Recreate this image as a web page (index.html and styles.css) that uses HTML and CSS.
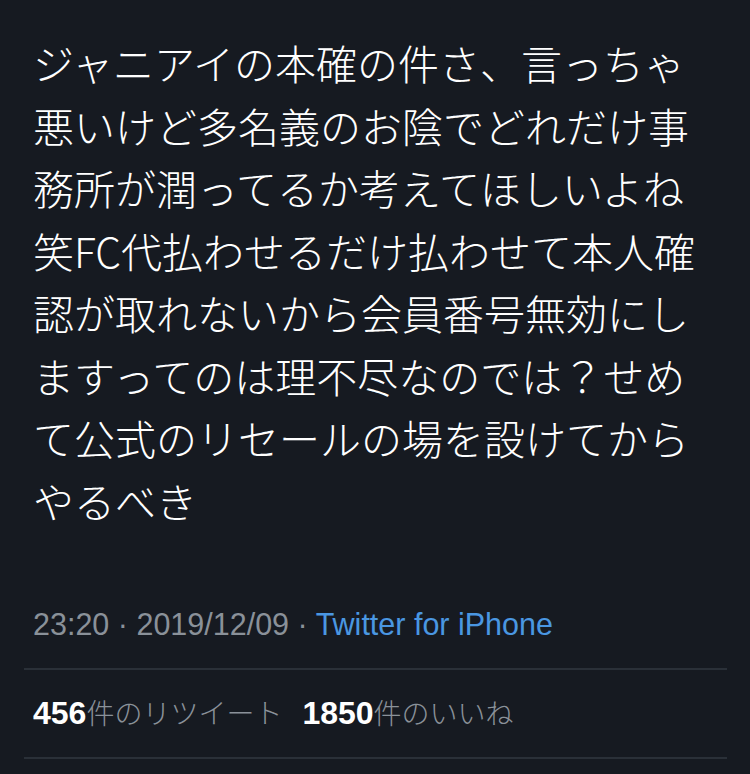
FILE: index.html
```html
<!DOCTYPE html>
<html lang="ja">
<head>
<meta charset="utf-8">
<link rel="stylesheet" href="styles.css">
</head>
<body>
<div class="tweet">
  <div class="text">
    <span class="line">ジャニアイの本確の件さ、言っちゃ</span>
    <span class="line">悪いけど多名義のお陰でどれだけ事</span>
    <span class="line">務所が潤ってるか考えてほしいよね</span>
    <span class="line">笑FC代払わせるだけ払わせて本人確</span>
    <span class="line">認が取れないから会員番号無効にし</span>
    <span class="line">ますってのは理不尽なのでは？せめ</span>
    <span class="line">て公式のリセールの場を設けてから</span>
    <span class="line">やるべき</span>
  </div>
  <div class="meta">23:20 · 2019/12/09 · <span class="source">Twitter for iPhone</span></div>
  <div class="stats"><b class="num">456</b>件のリツイート<span class="gap"></span><b class="num">1850</b>件のいいね</div>
</div>
</body>
</html>
```
FILE: styles.css
```css
html, body {
  margin: 0;
  padding: 0;
  background: #161a21;
}
body {
  width: 750px;
  height: 774px;
  overflow: hidden;
  font-family: "Liberation Sans", "Noto Sans CJK JP", sans-serif;
}
.tweet {
  padding: 31px 23px 0 24px;
}
.text {
  padding-left: 9px;
  color: #ffffff;
  font-family: "Noto Sans CJK JP", "Liberation Sans", sans-serif;
  font-size: 41px;
  font-weight: 300;
  line-height: 62.5px;
}
.line {
  display: block;
  white-space: nowrap;
}
.meta {
  margin-top: 73px;
  padding: 0 0 24px 9px;
  font-size: 30.5px;
  line-height: 40px;
  color: #8a9199;
  border-bottom: 2px solid #2a3038;
}
.source {
  color: #4a97e2;
}
.stats {
  padding: 23px 0 22px 9px;
  font-size: 28px;
  line-height: 40px;
  color: #8a9199;
  font-weight: 300;
  border-bottom: 2px solid #2a3038;
}
.num {
  color: #ffffff;
  font-family: "Liberation Sans", sans-serif;
  font-weight: 700;
  font-size: 32px;
}
.gap {
  display: inline-block;
  width: 20px;
}
```
